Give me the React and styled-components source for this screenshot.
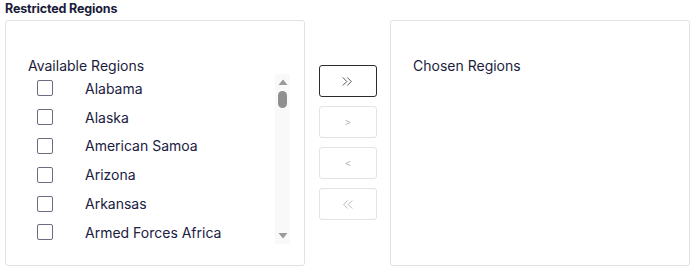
import React from "react";
import styled, { createGlobalStyle } from "styled-components";

const Global = createGlobalStyle`
  html, body { margin: 0; padding: 0; background: #fff; }
  body { font-family: Inter, "Noto Sans", sans-serif; color: #1e1e3f; }
  * { box-sizing: border-box; }
`;

const Page = styled.div`
  width: 695px;
  height: 270px;
  padding: 0 0 0 5px;
  display: flex;
  flex-direction: column;
`;

const Title = styled.div`
  font-size: 12.5px;
  font-weight: 700;
  line-height: 16px;
  height: 20px;
  color: #1b1b3a;
  padding-top: 1px;
  letter-spacing: -0.15px;
`;

const Row = styled.div`
  display: flex;
  align-items: flex-start;
`;

const Panel = styled.div`
  width: ${(p) => p.$w}px;
  height: 246px;
  border: 1px solid #e1e1e8;
  border-radius: 3px;
  padding: 36px 0 0 22px;
`;

const Heading = styled.div`
  font-size: 14px;
  line-height: 17px;
  color: #1c1c3d;
`;

const ListWrap = styled.div`
  display: flex;
  width: 262px;
  height: 170px;
`;

const List = styled.div`
  flex: 1;
  overflow: hidden;
`;

const Item = styled.label`
  display: flex;
  align-items: center;
  height: 28.8px;
  padding-left: 9px;
  font-size: 14px;
  color: #20203f;
  white-space: nowrap;
`;

const Box = styled.span`
  width: 16px;
  height: 16px;
  border: 1px solid #6c6c80;
  border-radius: 2px;
  flex: none;
  margin-right: 32px;
`;

const Scrollbar = styled.div`
  width: 15px;
  flex: none;
  background: #f9f9f9;
  display: flex;
  flex-direction: column;
  align-items: center;
  padding: 5px 0 5px;
`;

const Thumb = styled.div`
  width: 9px;
  height: 17px;
  border-radius: 5px;
  background: #8f8f8f;
  margin-top: 6px;
`;

const Spacer = styled.div`
  flex: 1;
`;

const Controls = styled.div`
  width: 85px;
  display: flex;
  flex-direction: column;
  align-items: center;
  gap: 9px;
  padding-top: 45px;
`;

const Btn = styled.button`
  width: 58px;
  height: 32px;
  border: 1px solid ${(p) => (p.$active ? "#2b2b2b" : "#e3e3e6")};
  border-radius: 3px;
  background: #fff;
  color: ${(p) => (p.$active ? "#444" : "#b0b0b0")};
  padding: 0;
  display: flex;
  align-items: center;
  justify-content: center;
`;

const Arrow = ({ dir }) => (
  <svg width="10" height="6" viewBox="0 0 10 6">
    <path d={dir === "up" ? "M0.5 6 L5 0.5 L9.5 6 Z" : "M0.5 0 L5 5.5 L9.5 0 Z"} fill="#9a9a9a" />
  </svg>
);

const Double = ({ left }) => (
  <svg width="11" height="9" viewBox="0 0 11 9" fill="none" stroke="currentColor" strokeWidth="0.9">
    <g transform={left ? "translate(11 0) scale(-1 1)" : undefined}>
      <path d="M0.8 0.5 L4.8 4.5 L0.8 8.5" />
      <path d="M5.3 0.5 L9.3 4.5 L5.3 8.5" />
    </g>
  </svg>
);

const Single = ({ left }) => (
  <svg width="6" height="5" viewBox="0 0 6 5" fill="none" stroke="currentColor" strokeWidth="0.9">
    <path d={left ? "M5.5 0.3 L0.8 2.5 L5.5 4.7" : "M0.5 0.3 L5.2 2.5 L0.5 4.7"} />
  </svg>
);

const regions = ["Alabama", "Alaska", "American Samoa", "Arizona", "Arkansas", "Armed Forces Africa"];

export default function App() {
  return (
    <>
      <Global />
      <Page>
        <Title>Restricted Regions</Title>
        <Row>
          <Panel $w={300}>
            <Heading>Available Regions</Heading>
            <ListWrap>
              <List>
                {regions.map((r) => (
                  <Item key={r}>
                    <Box />
                    {r}
                  </Item>
                ))}
              </List>
              <Scrollbar>
                <Arrow dir="up" />
                <Thumb />
                <Spacer />
                <Arrow dir="down" />
              </Scrollbar>
            </ListWrap>
          </Panel>
          <Controls>
            <Btn $active aria-label="Move all right"><Double /></Btn>
            <Btn aria-label="Move right"><Single /></Btn>
            <Btn aria-label="Move left"><Single left /></Btn>
            <Btn aria-label="Move all left"><Double left /></Btn>
          </Controls>
          <Panel $w={300}>
            <Heading>Chosen Regions</Heading>
          </Panel>
        </Row>
      </Page>
    </>
  );
}
